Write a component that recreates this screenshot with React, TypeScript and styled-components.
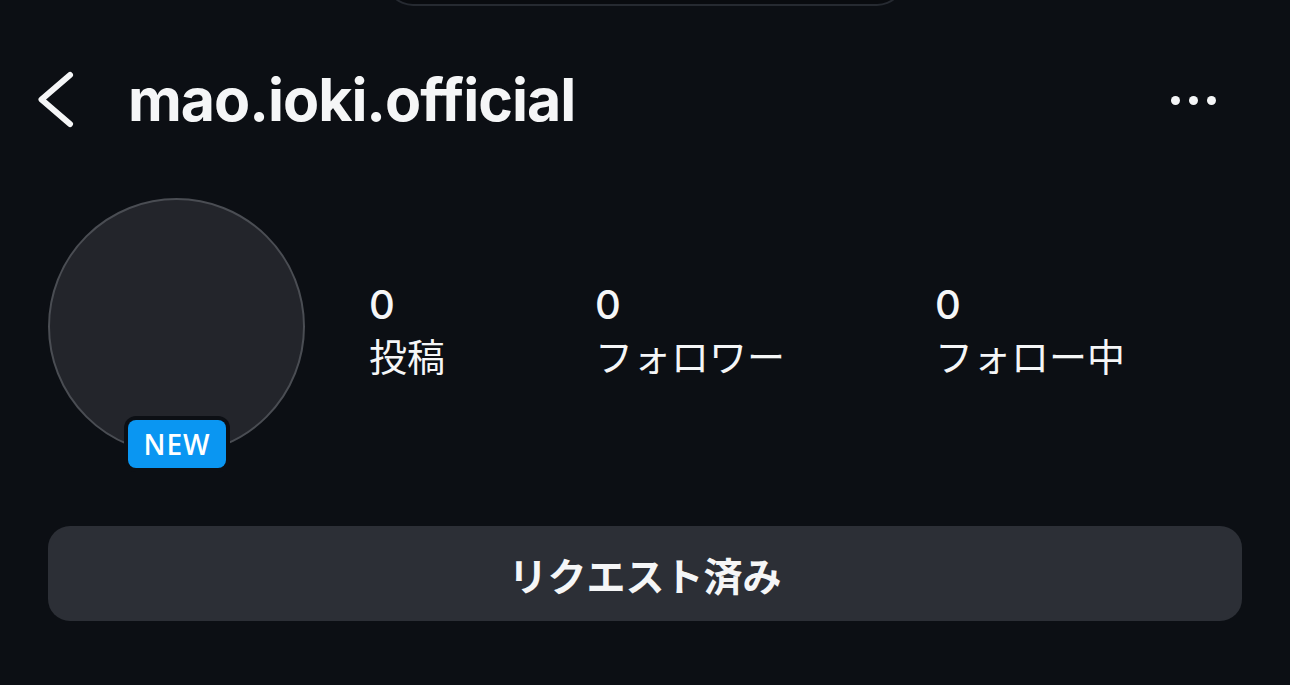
import React from "react";
import styled, { createGlobalStyle } from "styled-components";

const Global = createGlobalStyle`
  html, body { margin: 0; padding: 0; background: #0c0f14; }
  body { font-family: Inter, "Noto Sans CJK JP", sans-serif; color: #f5f6f7; }
`;

const Screen = styled.div`
  width: 1290px;
  height: 685px;
  background: #0c0f14;
  overflow: hidden;
  display: flex;
  flex-direction: column;
`;

const Island = styled.div`
  width: 520px;
  height: 40px;
  margin: -34px auto 0;
  box-sizing: border-box;
  background: #090b0f;
  border: 2px solid #262a31;
  border-top: none;
  border-radius: 0 0 28px 28px;
`;

const Header = styled.div`
  display: flex;
  align-items: center;
  height: 60px;
  margin-top: 64px;
  padding: 0 48px 0 36px;
`;

const BackButton = styled.div`
  width: 40px;
  height: 60px;
  display: flex;
  align-items: center;
`;

const Username = styled.h1`
  margin: 0 0 0 52px;
  font-family: Inter, "Noto Sans", sans-serif;
  font-size: 59px;
  font-weight: 700;
  letter-spacing: -1px;
  line-height: 60px;
  color: #f5f6f7;
  flex: 1;
`;

const Dots = styled.div`
  display: flex;
  gap: 9px;
  margin-right: 26px;
`;

const Dot = styled.span`
  width: 9px;
  height: 9px;
  border-radius: 50%;
  background: #f5f6f7;
`;

const ProfileRow = styled.div`
  display: flex;
  align-items: center;
  padding: 0 48px;
  margin-top: 68px;
`;

const AvatarWrap = styled.div`
  position: relative;
  width: 257px;
  height: 257px;
  flex-shrink: 0;
`;

const Avatar = styled.div`
  width: 100%;
  height: 100%;
  box-sizing: border-box;
  border-radius: 50%;
  background: #23252b;
  border: 2px solid #4a4d53;
`;

const NewBadge = styled.div`
  position: absolute;
  left: 76px;
  top: 218px;
  padding: 4px;
  border-radius: 12px;
  background: #0c0f14;
`;

const NewLabel = styled.div`
  width: 98px;
  height: 48px;
  border-radius: 8px;
  background: #0a96f2;
  color: #ffffff;
  font-family: "Open Sans", Inter, sans-serif;
  font-size: 28px;
  font-weight: 600;
  letter-spacing: 1px;
  display: flex;
  align-items: center;
  justify-content: center;
`;

const Stats = styled.div`
  display: flex;
  gap: 150px;
  margin-left: 64px;
  margin-top: 10px;
`;

const Stat = styled.div`
  display: flex;
  flex-direction: column;
`;

const StatNumber = styled.div`
  font-family: Inter, sans-serif;
  font-size: 40px;
  font-weight: 500;
  line-height: 46px;
  color: #f5f6f7;
`;

const StatLabel = styled.div`
  font-family: "Noto Sans CJK JP", sans-serif;
  font-size: 38px;
  font-weight: 400;
  line-height: 54px;
  color: #f5f6f7;
`;

const RequestButton = styled.button`
  margin: 71px 48px 0;
  height: 95px;
  border: none;
  border-radius: 22px;
  background: #2c2f36;
  color: #f5f6f7;
  font-family: "Noto Sans CJK JP", sans-serif;
  font-size: 39px;
  font-weight: 700;
  display: flex;
  align-items: center;
  justify-content: center;
  padding: 0;
`;

const stats = [
  { n: "0", label: "投稿" },
  { n: "0", label: "フォロワー" },
  { n: "0", label: "フォロー中" },
];

export default function App() {
  return (
    <Screen>
      <Global />
      <Island />
      <Header>
        <BackButton>
          <svg width="40" height="60" viewBox="0 0 40 60" fill="none">
            <path
              d="M34 5 L5.5 29.5 L34 54"
              stroke="#f5f6f7"
              strokeWidth="6"
              strokeLinecap="round"
              strokeLinejoin="round"
            />
          </svg>
        </BackButton>
        <Username>mao.ioki.official</Username>
        <Dots>
          <Dot />
          <Dot />
          <Dot />
        </Dots>
      </Header>
      <ProfileRow>
        <AvatarWrap>
          <Avatar />
          <NewBadge>
            <NewLabel>NEW</NewLabel>
          </NewBadge>
        </AvatarWrap>
        <Stats>
          {stats.map((s) => (
            <Stat key={s.label}>
              <StatNumber>{s.n}</StatNumber>
              <StatLabel>{s.label}</StatLabel>
            </Stat>
          ))}
        </Stats>
      </ProfileRow>
      <RequestButton>リクエスト済み</RequestButton>
    </Screen>
  );
}
